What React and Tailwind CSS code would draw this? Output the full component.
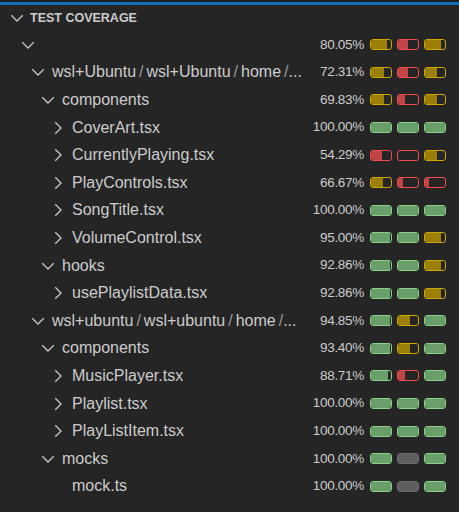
const BAR = {
  y: { border: 'border-[#cca700]', fill: 'bg-[#9c7f06]' },
  r: { border: 'border-[#f14c4c]', fill: 'bg-[#c24444]' },
  g: { border: 'border-[#89d185]', fill: 'bg-[#6a9e6a]' },
  n: { border: 'border-[#6b6b6b]', fill: 'bg-[#5f5f5f]' },
};

const INDENT = ['pl-[18px]', 'pl-[28px]', 'pl-[38px]', 'pl-[48px]'];

const G3 = [['g', 100], ['g', 100], ['g', 100]];

const rows = [
  { depth: 0, chevron: 'down', label: '', pct: '80.05%', bars: [['y', 78], ['r', 50], ['y', 80]] },
  { depth: 1, chevron: 'down', path: ['wsl+Ubuntu', 'wsl+Ubuntu', 'home', '...'], pct: '72.31%', bars: [['y', 63], ['r', 49], ['y', 61]] },
  { depth: 2, chevron: 'down', label: 'components', pct: '69.83%', bars: [['y', 65], ['r', 34], ['y', 62]] },
  { depth: 3, chevron: 'right', label: 'CoverArt.tsx', pct: '100.00%', bars: G3 },
  { depth: 3, chevron: 'right', label: 'CurrentlyPlaying.tsx', pct: '54.29%', bars: [['r', 53], ['r', 0], ['y', 58]] },
  { depth: 3, chevron: 'right', label: 'PlayControls.tsx', pct: '66.67%', bars: [['y', 61], ['r', 27], ['r', 19]] },
  { depth: 3, chevron: 'right', label: 'SongTitle.tsx', pct: '100.00%', bars: G3 },
  { depth: 3, chevron: 'right', label: 'VolumeControl.tsx', pct: '95.00%', bars: [['g', 94], ['g', 100], ['y', 78]] },
  { depth: 2, chevron: 'down', label: 'hooks', pct: '92.86%', bars: [['g', 94], ['g', 100], ['y', 78]] },
  { depth: 3, chevron: 'right', label: 'usePlaylistData.tsx', pct: '92.86%', bars: [['g', 94], ['g', 100], ['y', 78]] },
  { depth: 1, chevron: 'down', path: ['wsl+ubuntu', 'wsl+ubuntu', 'home', '...'], pct: '94.85%', bars: [['g', 94], ['y', 60], ['g', 100]] },
  { depth: 2, chevron: 'down', label: 'components', pct: '93.40%', bars: [['g', 94], ['y', 60], ['g', 100]] },
  { depth: 3, chevron: 'right', label: 'MusicPlayer.tsx', pct: '88.71%', bars: [['g', 86], ['r', 37], ['g', 100]] },
  { depth: 3, chevron: 'right', label: 'Playlist.tsx', pct: '100.00%', bars: G3 },
  { depth: 3, chevron: 'right', label: 'PlayListItem.tsx', pct: '100.00%', bars: G3 },
  { depth: 2, chevron: 'down', label: 'mocks', pct: '100.00%', bars: [['g', 100], ['n', 100], ['g', 100]] },
  { depth: 3, chevron: null, label: 'mock.ts', pct: '100.00%', bars: [['g', 100], ['n', 100], ['g', 100]] },
];

function Chevron({ dir }) {
  if (!dir) return <span className="w-5 h-5 shrink-0" />;
  const d = dir === 'down' ? 'M3.4 5.8L8 10.4l4.6-4.6' : 'M5.8 3.4L10.4 8l-4.6 4.6';
  return (
    <svg viewBox="0 0 16 16" className="w-5 h-5 shrink-0" fill="none" stroke="#c5c5c5" strokeWidth="1.1">
      <path d={d} />
    </svg>
  );
}

function Bar({ kind, value }) {
  const c = BAR[kind];
  return (
    <div className={`w-[22px] h-[11px] rounded-[3px] border overflow-hidden ${c.border}`}>
      <div className={`h-full ${c.fill}`} style={{ width: `${value}%` }} />
    </div>
  );
}

function Row({ row }) {
  return (
    <div className="flex items-center h-[27.6px] pr-[13px]">
      <div className={`flex items-center gap-1 flex-1 min-w-0 pr-[8px] ${INDENT[row.depth]}`}>
        <Chevron dir={row.chevron} />
        <div className="min-w-0 truncate text-[16px] text-[#cccccc]">
          {row.path
            ? row.path.map((p, i) => (
                <span key={i}>
                  {i > 0 && <span className="text-[#9a9a9a] mx-[3px]">/</span>}
                  {p === '...' ? <span className="-ml-[3px]">...</span> : p}
                </span>
              ))
            : row.label}
        </div>
      </div>
      <span className="text-[13.5px] tracking-[-0.3px] text-[#cccccc] mr-[6px]">{row.pct}</span>
      <div className="flex gap-[5px]">
        {row.bars.map(([k, v], i) => (
          <Bar key={i} kind={k} value={v} />
        ))}
      </div>
    </div>
  );
}

export default function App() {
  return (
    <div
      className="w-[459px] h-[512px] bg-[#252526] overflow-hidden flex flex-col"
      style={{ fontFamily: '"Liberation Sans", Arial, sans-serif' }}
    >
      <div className="h-[2px] bg-[#1e1e1e] shrink-0" />
      <div className="h-[3px] bg-[#0e6fbd] shrink-0" />
      <div className="flex items-center h-[26px] pl-[7px] gap-[3px] shrink-0">
        <Chevron dir="down" />
        <span className="text-[12.5px] font-bold text-[#cccccc]">TEST COVERAGE</span>
      </div>
      <div className="flex flex-col">
        {rows.map((r, i) => (
          <Row key={i} row={r} />
        ))}
      </div>
    </div>
  );
}
